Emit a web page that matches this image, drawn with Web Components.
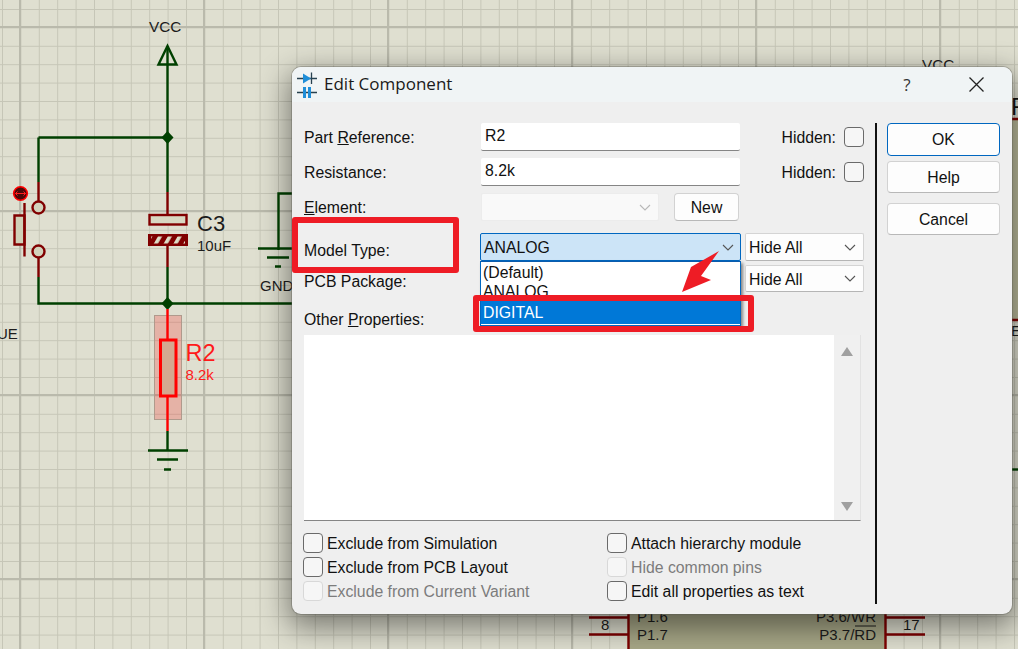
<!DOCTYPE html>
<html>
<head>
<meta charset="utf-8">
<title>Edit Component</title>
<style>
  html, body { margin: 0; padding: 0; background: #dfdfd0; }
  body { font-family: "Liberation Sans", Arial, sans-serif; overflow: hidden; }
</style>
</head>
<body>

<schematic-screen>
  <schematic-canvas></schematic-canvas>
  <edit-dialog></edit-dialog>
  <red-callout style="left:292px;top:217px;width:167px;height:56px"></red-callout>
  <red-callout style="left:473px;top:295px;width:281px;height:37px"></red-callout>
  <red-arrow></red-arrow>
</schematic-screen>

<script>
// chevron used by every combo box
const CHEVRON = `<svg width="12" height="7" viewBox="0 0 12 7"><path d="M1 1l5 5 5-5" fill="none" stroke="currentColor" stroke-width="1.1"/></svg>`;

class SchematicScreen extends HTMLElement {
  constructor() {
    super();
    this.attachShadow({mode: 'open'}).innerHTML = `
      <style>
        :host { display: block; position: relative; width: 1018px; height: 649px; overflow: hidden; background: #dfdfd0; }
      </style>
      <slot></slot>`;
  }
}
customElements.define('schematic-screen', SchematicScreen);

class SchematicCanvas extends HTMLElement {
  constructor() {
    super();
    this.attachShadow({mode: 'open'}).innerHTML = `
      <style>
        :host { display: block; position: absolute; left: 0; top: 0; }
        svg { display: block; }
        text { font-family: "Liberation Sans", Arial, sans-serif; fill: #1c1c1c; }
        .w { stroke: #004000; stroke-width: 2.4; fill: none; }
        .m { stroke: #800000; stroke-width: 2.4; fill: none; }
        .r { stroke: #ff0000; stroke-width: 2.4; fill: none; }
      </style>
      <svg width="1018" height="649" viewBox="0 0 1018 649">
        <defs>
          <pattern id="minor" width="18.4" height="18.4" patternUnits="userSpaceOnUse" x="2" y="9">
            <path d="M0.5 0V18.4M0 0.5H18.4" stroke="#c6c6b7" stroke-width="1" fill="none"/>
          </pattern>
          <pattern id="major" width="184" height="184" patternUnits="userSpaceOnUse" x="19" y="26">
            <path d="M1 0V184M0 1H184" stroke="#babaac" stroke-width="2" fill="none"/>
          </pattern>
          <pattern id="hatch" width="8.500" height="8.500" patternUnits="userSpaceOnUse" patternTransform="rotate(30)">
            <rect width="3.600" height="8.500" fill="#dcdcc6"/>
          </pattern>
        </defs>
        <rect width="1018" height="649" fill="#dfdfd0"/>
        <rect width="1018" height="649" fill="url(#minor)"/>
        <rect width="1018" height="649" fill="url(#major)"/>

        <!-- VCC rail -->
        <text x="149" y="32" font-size="15.300">VCC</text>
        <path class="w" d="M158.500 64.500L167.500 46 176.500 64.500Z" stroke-linejoin="miter"/>
        <path class="w" d="M167.500 46V192M38.500 137.500H167.500M38.500 137.500V182"/>
        <path d="M167.500 131l6 6.500-6 6.500-6-6.500z" fill="#004000"/>
        <path class="m" d="M167.500 192V214M38.500 182V201"/>

        <!-- push button -->
        <circle cx="20.500" cy="193.500" r="6.800" fill="#4d0a0a" stroke="#ff0000" stroke-width="1.600"/>
        <path d="M15.500 193.500h10M17.500 191.500l-2 2 2 2M23.500 191.500l2 2-2 2" fill="none" stroke="#ff2020" stroke-width="1"/>
        <circle cx="38.500" cy="207.500" r="6" fill="#d2d2bc" stroke="#800000" stroke-width="2.400"/>
        <circle cx="38.500" cy="251.500" r="6" fill="#d2d2bc" stroke="#800000" stroke-width="2.400"/>
        <path d="M24.500 215.500H14.500V244.500H24.500Z" fill="#d0d0b8" stroke="#800000" stroke-width="2.400"/>
        <path class="m" d="M24.500 203V256.500M38.500 258V277"/>
        <path class="w" d="M38.500 277V303.500H292"/>

        <!-- C3 -->
        <rect x="149.500" y="215" width="37" height="9.500" fill="#d8d8c2" stroke="#800000" stroke-width="2.400"/>
        <rect x="148" y="234" width="40" height="12" fill="#800000"/>
        <rect x="151" y="236.500" width="34" height="7" fill="url(#hatch)"/>
        <path class="m" d="M167.500 246V267"/>
        <path class="w" d="M167.500 267V303"/>
        <path d="M167.500 297l6 6.500-6 6.500-6-6.500z" fill="#004000"/>
        <text x="197" y="231" font-size="22">C3</text>
        <text x="197" y="251" font-size="15">10uF</text>

        <!-- R2, selected -->
        <rect x="154.500" y="315.500" width="27" height="104" fill="#ff0000" fill-opacity=".2" stroke="#b09a8c" stroke-width="1"/>
        <path class="r" d="M167.500 309V340M167.500 396V431"/>
        <rect x="160.500" y="340" width="15.500" height="56" fill="#d4a890" stroke="#ff0000" stroke-width="3"/>
        <text x="185.500" y="361" font-size="23.500" style="fill:#ff1a1a">R2</text>
        <text x="185.500" y="380" font-size="15" style="fill:#ff1a1a">8.2k</text>
        <path class="w" d="M167.500 431V450M148 450.500H188M157 459.500H178M164 469.500H171"/>

        <text x="-3" y="339" font-size="15">UE</text>

        <!-- GND next to the dialog -->
        <path class="w" d="M278.500 250V193.500H292M258 248.500H292M267 257.500H289M275 266.500H281"/>
        <text x="260" y="291" font-size="15">GND</text>

        <!-- part behind the dialog, right side -->
        <text x="922" y="70" font-size="15.300">VCC</text>
        <rect x="1012" y="119" width="6" height="201" fill="#bcbc9c"/>
        <path class="m" d="M1012 119H1018M1012 320H1018"/>
        <text x="1011" y="115" font-size="24" style="fill:#111">F</text>
        <text x="1011" y="336" font-size="15">ES</text>
        <path class="w" d="M1012 469.500H1018"/>

        <!-- U1 bottom -->
        <rect x="628" y="600" width="257" height="49" fill="#a8a888"/>
        <path class="m" d="M628.500 600V649M885.500 600V649M589 617.500H628M589 634.500H628M885 617.500H925M885 634.500H925"/>
        <text x="601" y="630" font-size="15">8</text>
        <text x="903" y="630" font-size="15">17</text>
        <text x="637" y="622" font-size="15">P1.6</text>
        <text x="637" y="640" font-size="15">P1.7</text>
        <text x="876" y="622" font-size="15" text-anchor="end">P3.6/WR</text>
        <text x="876" y="640" font-size="15" text-anchor="end">P3.7/RD</text>
        <path d="M855 626H876" stroke="#1c1c1c" stroke-width="1"/>
      </svg>`;
  }
}
customElements.define('schematic-canvas', SchematicCanvas);

class TitleBar extends HTMLElement {
  constructor() {
    super();
    this.attachShadow({mode: 'open'}).innerHTML = `
      <style>
        :host { display: flex; align-items: center; height: 35px; background: #f0f4f5; color: #1a1a1a; }
        svg { display: block; flex: none; }
        .icon { margin: 0 7px 0 5px; }
        .caption { flex: 1; font: 17px "Open Sans", "Noto Sans", sans-serif; margin-top: -2px; }
        .help { width: 20px; margin-right: 52px; text-align: center; font: 17px "Open Sans", sans-serif; color: #333; }
        .close { margin-right: 28px; }
      </style>
      <svg class="icon" width="20" height="26" viewBox="0 0 20 26">
        <path d="M0 6.500H20M0 20.500H20" stroke="#27414f" stroke-width="1.300"/>
        <path d="M6 1.500L14 6.500 6 11.500Z" fill="#1f8ed8"/>
        <path d="M14.500 0.500V12" stroke="#27414f" stroke-width="1.300"/>
        <rect x="6" y="15" width="3" height="11" fill="#1f8ed8"/>
        <rect x="11" y="15" width="3" height="11" fill="#1f8ed8"/>
      </svg>
      <span class="caption"><slot></slot></span>
      <span class="help">?</span>
      <svg class="close" width="15" height="15" viewBox="0 0 15 15"><path d="M.5.500l14 14M14.500.500l-14 14" stroke="#222" stroke-width="1.300" fill="none"/></svg>`;
  }
}
customElements.define('title-bar', TitleBar);

class TextField extends HTMLElement {
  constructor() {
    super();
    this.attachShadow({mode: 'open'}).innerHTML = `
      <style>
        :host { display: flex; align-items: center; box-sizing: border-box; width: 259px; height: 28px; padding: 0 4px 1px;
                background: #fff; border-bottom: 1px solid #858585; border-radius: 2px; font-size: 15.800px; color: #111; }
      </style>
      <slot></slot>`;
  }
}
customElements.define('text-field', TextField);

class ComboBox extends HTMLElement {
  constructor() {
    super();
    this.attachShadow({mode: 'open'}).innerHTML = `
      <style>
        :host { display: flex; align-items: center; justify-content: space-between; box-sizing: border-box; position: relative;
                height: 28px; padding: 0 7px 0 3px; background: #fdfdfd; border: 1px solid #d4d4d4; border-bottom-color: #b5b5b5;
                border-radius: 2px; font-size: 15.800px; color: #111; }
        :host([focused]) { background: #cce4f7; border: 1px solid #0067c0; padding-right: 6px; }
        :host([disabled]) { background: #f9f9f9; border-color: #ececec; }
        .value { padding-top: 2px; }
        .arrow { display: flex; color: #555; }
        :host([disabled]) .arrow { color: #b8b8b8; }
      </style>
      <span class="value"><slot></slot></span>
      <span class="arrow">${CHEVRON}</span>
      <slot name="list"></slot>`;
  }
}
customElements.define('combo-box', ComboBox);

class ComboList extends HTMLElement {
  constructor() {
    super();
    this.attachShadow({mode: 'open'}).innerHTML = `
      <style>
        :host { display: block; position: absolute; left: -1px; right: -1px; top: 27px; height: 65px; box-sizing: border-box;
                padding-top: 1px; background: #fff; border: 1px solid #0067c0; border-top: 1px solid #0b5cad; overflow: hidden;
                box-shadow: 2px 2px 3px rgba(0,0,0,.45); font-size: 15.800px; color: #111; }
        ::slotted(div) { height: 19px; line-height: 19px; padding-left: 2px; }
        ::slotted(.on) { background: #0078d7; color: #fff; height: 23px; line-height: 23px; }
      </style>
      <slot></slot>`;
  }
}
customElements.define('combo-list', ComboList);

class UiButton extends HTMLElement {
  constructor() {
    super();
    this.attachShadow({mode: 'open'}).innerHTML = `
      <style>
        :host { display: flex; align-items: center; justify-content: center; box-sizing: border-box; padding-top: 2px; background: #fdfdfd;
                border: 1px solid #d2d2d2; border-bottom-color: #b8b8b8; border-radius: 4px; font-size: 15.800px; color: #111; }
        :host([primary]) { border: 1px solid #0067c0; padding-top: 1px; }
      </style>
      <slot></slot>`;
  }
}
customElements.define('ui-button', UiButton);

class CheckBox extends HTMLElement {
  constructor() {
    super();
    this.attachShadow({mode: 'open'}).innerHTML = `
      <style>
        :host { display: flex; align-items: center; height: 24px; font-size: 15.800px; color: #111; }
        :host([disabled]) { color: #7c7c7c; }
        i { display: block; box-sizing: border-box; width: 20px; height: 20px; flex: none; background: #f6f6f6;
            border: 1px solid #6a6a6a; border-radius: 4px; }
        :host([disabled]) i { border-color: #d8d8d8; }
        span { margin-left: 4px; padding-top: 2px; }
      </style>
      <i></i><span><slot></slot></span>`;
  }
  connectedCallback() {
    // no label text: the box stands alone, without the gap
    if (!this.textContent.trim()) this.shadowRoot.querySelector('span').style.display = 'none';
  }
}
customElements.define('check-box', CheckBox);

class ScrollArea extends HTMLElement {
  constructor() {
    super();
    this.attachShadow({mode: 'open'}).innerHTML = `
      <style>
        :host { display: flex; box-sizing: border-box; width: 557px; height: 186px; background: #fff;
                border-right: 1px solid #e2e2e2; border-bottom: 1px solid #858585; }
        .text { flex: 1; }
        .bar { width: 26px; display: flex; flex-direction: column; justify-content: space-between; align-items: center;
               padding: 12px 0 9px; box-sizing: border-box; background: #f0f0f0; }
        svg { display: block; }
      </style>
      <div class="text"></div>
      <div class="bar">
        <svg width="12" height="9" viewBox="0 0 12 9"><path d="M6 0l6 9H0z" fill="#a0a0a0"/></svg>
        <svg width="12" height="9" viewBox="0 0 12 9"><path d="M6 9L0 0h12z" fill="#a0a0a0"/></svg>
      </div>`;
  }
}
customElements.define('scroll-area', ScrollArea);

class EditDialog extends HTMLElement {
  constructor() {
    super();
    this.attachShadow({mode: 'open'}).innerHTML = `
      <style>
        :host { display: flex; flex-direction: column; position: absolute; left: 292px; top: 67px; width: 720px; height: 547px;
                background: #efefef; border-radius: 9px; font-family: "Liberation Sans", Arial, sans-serif;
                box-shadow: 0 0 0 1px rgba(90,90,80,.35), 0 10px 30px 4px rgba(0,0,0,.45); }
        title-bar { border-radius: 9px 9px 0 0; }
        .body { flex: 1; display: flex; }
        .main { width: 572px; padding: 21px 0 0 12px; box-sizing: border-box; display: flex; flex-direction: column; font-size: 15.800px; color: #111; }
        .row { display: flex; align-items: center; }
        .row > label { flex: none; width: 177px; padding-top: 2px; }
        .grow { flex: 1; text-align: right; padding: 2px 8px 0 0; }
        .r2 { margin-top: 7px; }
        .r3 { margin-top: 7px; }
        .r4 { margin-top: 12px; }
        .r5 { margin-top: 4px; }
        .r6 { margin-top: 16px; height: 22px; }
        .area { margin-top: 5px; }
        .checks { display: grid; grid-template-columns: 304px 1fr; margin: 10px 0 0 -1px; }
        .rule { width: 2px; height: 481px; margin: 21px 10px 0 11px; background: #111; flex: none; }
        .side { width: 113px; padding-top: 21px; display: flex; flex-direction: column; }
        .side ui-button { height: 32px; }
        u { text-underline-offset: 1px; }
      </style>
      <title-bar>Edit Component</title-bar>
      <div class="body">
        <div class="main">
          <div class="row">
            <label>Part <u>R</u>eference:</label>
            <text-field>R2</text-field>
            <span class="grow">Hidden:</span>
            <check-box style="height:28px"></check-box>
          </div>
          <div class="row r2">
            <label>Resistance:</label>
            <text-field>8.2k</text-field>
            <span class="grow">Hidden:</span>
            <check-box style="height:28px"></check-box>
          </div>
          <div class="row r3">
            <label><u>E</u>lement:</label>
            <combo-box disabled style="width:178px"></combo-box>
            <ui-button style="width:65px;height:28px;margin-left:15px">New</ui-button>
          </div>
          <div class="row r4">
            <label style="width:176px;padding-top:8px">Model Type:</label>
            <combo-box focused style="width:261px">ANALOG
              <combo-list slot="list">
                <div>(Default)</div>
                <div>ANALOG</div>
                <div class="on">DIGITAL</div>
              </combo-list>
            </combo-box>
            <combo-box style="width:119px;margin-left:4px">Hide All</combo-box>
          </div>
          <div class="row r5">
            <label style="padding-top:6px">PCB Package:</label>
            <span style="width:264px"></span>
            <combo-box style="width:119px;height:27px">Hide All</combo-box>
          </div>
          <div class="row r6"><label>Other <u>P</u>roperties:</label></div>
          <scroll-area class="area"></scroll-area>
          <div class="checks">
            <check-box>Exclude from Simulation</check-box>
            <check-box>Attach hierarchy module</check-box>
            <check-box>Exclude from PCB Layout</check-box>
            <check-box disabled>Hide common pins</check-box>
            <check-box disabled>Exclude from Current Variant</check-box>
            <check-box>Edit all properties as text</check-box>
          </div>
        </div>
        <div class="rule"></div>
        <div class="side">
          <ui-button primary style="height:33px">OK</ui-button>
          <ui-button style="margin-top:5px">Help</ui-button>
          <ui-button style="margin-top:10px">Cancel</ui-button>
        </div>
      </div>`;
  }
}
customElements.define('edit-dialog', EditDialog);

class RedCallout extends HTMLElement {
  constructor() {
    super();
    this.attachShadow({mode: 'open'}).innerHTML = `
      <style>
        :host { display: block; position: absolute; box-sizing: border-box; border: 6px solid #ee1c25; border-radius: 3px; }
      </style>`;
  }
}
customElements.define('red-callout', RedCallout);

class RedArrow extends HTMLElement {
  constructor() {
    super();
    this.attachShadow({mode: 'open'}).innerHTML = `
      <style>
        :host { display: block; position: absolute; left: 680px; top: 249px; }
        svg { display: block; }
      </style>
      <svg width="42" height="45" viewBox="680 249 42 45">
        <path d="M719 251L691 267 682 292 711 280 701 276Z" fill="#ee1c25"/>
      </svg>`;
  }
}
customElements.define('red-arrow', RedArrow);
</script>
</body>
</html>
